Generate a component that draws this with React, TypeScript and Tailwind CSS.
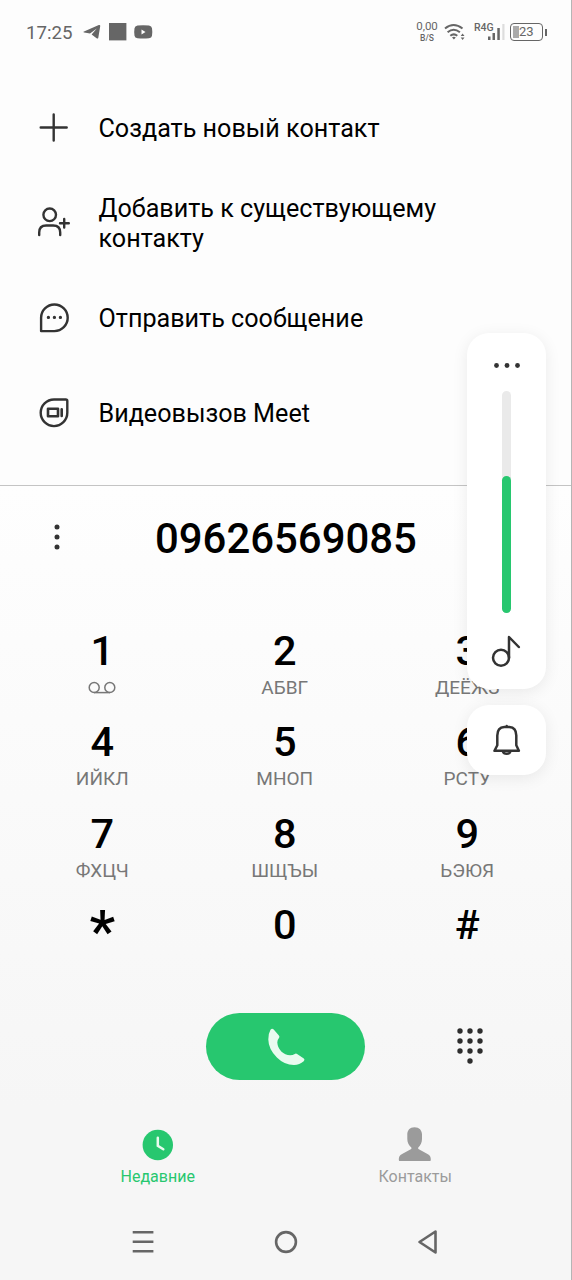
import type { ReactNode } from "react";

function StatusBar() {
  return (
    <header className="flex h-16 shrink-0 items-center pl-[26px] pr-[24px] text-[#666]">
      <span className="w-[57px] pt-[2px] text-[18.700px] leading-none">17:25</span>
      <svg className="h-5 w-[70px]" viewBox="0 0 70 20" fill="#666">
        <path d="M1 9.600 15.800 3.100q1.600-.5 1.400 1.100l-1.900 11.500q-.4 1.400-1.700.5l-5-3.600 5.200-6-6.800 4.800-5.800-.8q-1.500-.4-.2-1z" />
        <path d="M26 1h17.400v17.400H26z" />
        <path
          fillRule="evenodd"
          d="M54.500 3.600q5.500-.9 11.500 0 2.700.4 3 2.700.6 3.700 0 7.400-.3 2.200-3 2.500-6 .7-11.500 0-2.700-.3-3-2.500-.6-3.700 0-7.400.3-2.300 3-2.700zM58.500 7.500v5l4-2.500z"
        />
      </svg>
      <div className="ml-auto flex items-center">
        <div className="flex h-6 w-6 flex-col items-center justify-between pb-px text-[11.500px] leading-[12px]">
          <span>0,00</span>
          <span className="text-[8.500px] font-medium leading-[9px]">B/S</span>
        </div>
        <svg className="ml-[5px] h-6 w-[22px]" viewBox="0 0 22 24" fill="none" stroke="#666" strokeWidth="2">
          <path d="M1 8.500q8.500-7 17.500 0M3.600 12.200q6-5 12.300 0M6.300 15.800q3.500-2.800 7 0" />
          <path d="m8 17.500 1.900 2 1.900-2q-1.900-1.300-3.800 0zM16.700 16l1.900-2.500 1.900 2.500zM16.700 17.500l1.900 2.500 1.900-2.500z" fill="#666" stroke="none" />
        </svg>
        <div className="relative ml-2 h-6 w-[31px] text-[10.500px] leading-none">
          <span className="absolute left-0 top-[3px] font-medium">R4G</span>
          <svg className="h-6 w-[31px]" viewBox="0 0 31 24" fill="#666">
            <path d="M14 16.500h2.500V20H14zM18.500 13H21v7h-2.500zM23.300 8h2.500v12h-2.500z" />
            <path d="M28.300 4h2.200v16h-2.200z" fill="#ddd" />
          </svg>
        </div>
        <div className="ml-[5px] flex items-center gap-[2px]">
          <div className="relative h-[18px] w-[33px] rounded-[4px] border-[1.500px] border-[#666]">
            <div className="absolute left-[2px] top-[2px] h-[12px] w-[6px] bg-[#aaa]" />
            <span className="absolute left-[8px] top-[1px] text-[13px] leading-[14px]">23</span>
          </div>
          <div className="h-[7px] w-[2px] bg-[#666]" />
        </div>
      </div>
    </header>
  );
}

function MenuRow({ icon, children }: { icon: ReactNode; children: ReactNode }) {
  return (
    <li className="flex h-[95px] items-center pl-[36px]">
      <svg
        className="mr-[26.500px] h-9 w-9 shrink-0"
        viewBox="0 0 36 36"
        fill="none"
        stroke="#333"
        strokeWidth="2.400"
        strokeLinecap="round"
        strokeLinejoin="round"
      >
        {icon}
      </svg>
      <span className="w-[380px] pt-[2px] text-[25.150px] leading-[30px]">{children}</span>
    </li>
  );
}

const plusIcon = <path d="M17.700 4.500v26M4.700 17.500h26" />;
const addPersonIcon = (
  <>
    <circle cx="13.700" cy="9.800" r="6.300" />
    <path d="M3.200 30v-2.500q0-7 7-7h7q7 0 7 7V30M28.200 14v8.500M24 18.200h8.800" />
  </>
);
const messageIcon = (
  <>
    <path d="M5.100 31.100V17.800A13.300 13.300 0 1 1 18.400 31.100z" />
    <path d="M12.400 17.400h.01M18.400 17.400h.01M24.400 17.400h.01" strokeWidth="3.300" />
  </>
);
const meetIcon = (
  <>
    <path d="M31.300 6q0-1.500-1.500-1.500H18A13.300 13.300 0 1 0 31.300 17.800z" />
    <path d="M12 13.800h10v7.500H12zM25.700 14.200v6.700" strokeWidth="2.600" />
  </>
);

const keys: [string, string][] = [
  ["1", ""],
  ["2", "АБВГ"],
  ["3", "ДЕЁЖЗ"],
  ["4", "ИЙКЛ"],
  ["5", "МНОП"],
  ["6", "РСТУ"],
  ["7", "ФХЦЧ"],
  ["8", "ШЩЪЫ"],
  ["9", "ЬЭЮЯ"],
  ["*", ""],
  ["0", ""],
  ["#", ""],
];

function Key({ digit, letters }: { digit: string; letters: string }) {
  return (
    <button className="flex h-[91.300px] flex-col items-center">
      {digit === "*" ? (
        <span className="h-[50px] pt-[7px] text-[58px] font-medium leading-[50px]">*</span>
      ) : (
        <span className="h-[50px] pt-px text-[41.500px] font-medium leading-[50px]">{digit}</span>
      )}
      {digit === "1" && (
        <svg className="mt-[6px] h-3.5 w-7" viewBox="0 0 28 14" fill="none" stroke="#777" strokeWidth="1.500">
          <circle cx="6.200" cy="6.500" r="5" />
          <circle cx="21.800" cy="6.500" r="5" />
          <path d="M6 11.600h16" />
        </svg>
      )}
      {letters && <span className="text-[19px] leading-[25px] text-[#777]">{letters}</span>}
    </button>
  );
}

function VolumePanel() {
  return (
    <aside className="absolute left-[467px] top-[333px] flex w-[79px] flex-col gap-4">
      <div className="flex h-[356px] flex-col items-center rounded-[22px] bg-white pt-[30px] shadow-[0_3px_16px_rgba(0,0,0,0.08)]">
        <svg className="h-[5px] w-[26px]" viewBox="0 0 26 5" fill="#333">
          <circle cx="2.500" cy="2.500" r="2.400" />
          <circle cx="13" cy="2.500" r="2.400" />
          <circle cx="23.500" cy="2.500" r="2.400" />
        </svg>
        <div className="mt-[23px] flex h-[222px] w-[9px] flex-col justify-end rounded-full bg-[#eaeaea]">
          <div className="h-[137px] rounded-full bg-[#27c76f]" />
        </div>
        <svg className="mt-[21px] h-9 w-9" viewBox="0 0 36 36" fill="none" stroke="#333" strokeWidth="2.500" strokeLinejoin="round" strokeLinecap="round">
          <circle cx="12" cy="23.800" r="8" />
          <path d="M20 23.800V3l9.800 10" />
        </svg>
      </div>
      <div className="flex h-[70px] items-center justify-center rounded-[22px] bg-white shadow-[0_3px_16px_rgba(0,0,0,0.08)]">
        <svg className="h-9 w-9" viewBox="0 0 36 36" fill="none" stroke="#333" strokeWidth="2.500" strokeLinejoin="round" strokeLinecap="round">
          <path d="M5.500 28.800h24.400l-2.600-5.500V13.500q0-8-7-8.500h-5q-7 .5-7 8.500v9.800zM17.700 4.800V4M13.900 29.500a3.900 3 0 0 0 7.600 0" />
        </svg>
      </div>
    </aside>
  );
}

export default function App() {
  return (
    <div className="relative flex h-[1280px] w-[572px] flex-col overflow-hidden border-r border-[#b5b5b5] bg-[#f6f6f6] font-['Roboto',sans-serif] text-black">
      <section className="h-[486px] shrink-0 border-b border-[#c4c4c4] bg-[#fdfdfd]">
        <StatusBar />
        <ul className="pt-4">
          <MenuRow icon={plusIcon}>Создать новый контакт</MenuRow>
          <MenuRow icon={addPersonIcon}>Добавить к существующему контакту</MenuRow>
          <MenuRow icon={messageIcon}>Отправить сообщение</MenuRow>
          <MenuRow icon={meetIcon}>Видеовызов Meet</MenuRow>
        </ul>
      </section>

      <main className="flex h-[624px] shrink-0 flex-col bg-linear-to-b from-[#fefefe] to-[#f6f6f6]">
        <div className="flex h-[104px] items-center pl-[54px]">
          <svg className="mb-[2px] h-[26px] w-1.5" viewBox="0 0 6 26" fill="#333">
            <circle cx="3" cy="3" r="2.500" />
            <circle cx="3" cy="13" r="2.500" />
            <circle cx="3" cy="23" r="2.500" />
          </svg>
          <span className="ml-[95px] pt-[2px] text-[41.900px] font-medium leading-none">09626569085</span>
        </div>
        <div className="grid h-[401px] grid-cols-3 content-start pl-[11px] pr-[12.500px] pt-[35px]">
          {keys.map(([digit, letters]) => (
            <Key key={digit} digit={digit} letters={letters} />
          ))}
        </div>
        <div className="mt-[22px] flex items-center">
          <button className="ml-[206px] flex h-[67px] w-[159px] items-center justify-center rounded-full bg-[#27c76f]">
            <svg className="h-10 w-10" viewBox="0 0 40 40" fill="#e9fbef">
              <path d="M4.500 2.700q1.600-1.900 3.200-.2l5.200 6q1 1.200.2 2.200-1.800 2-1.800 4.900.3 5.200 4 8.800 3.800 3.600 8.800 3.900 2.700 0 4.700-1.400 1.100-.8 2.300 0l6.700 4.700q1.500 1.200-.1 2.700-4 3.700-9.800 3.700-9.500 0-17-7.500Q2.500 22.300 2.300 12.500 2.200 6.500 4.500 2.700z" />
            </svg>
          </button>
          <svg className="ml-[91px] mb-px h-9 w-7" viewBox="0 0 28 36" fill="#2e2e2e">
            {[3, 13, 23].map((y) =>
              [4, 14, 24].map((x) => <circle key={`${x}-${y}`} cx={x} cy={y} r="2.700" />),
            )}
            <circle cx="14" cy="33" r="2.700" />
          </svg>
        </div>
      </main>

      <nav className="flex h-[94px] shrink-0 pl-[29px] pr-[27px] pt-[15px] text-[16px] leading-[20px]">
        <div className="flex flex-1 flex-col items-center text-[#27c76f]">
          <svg className="mb-[6px] h-9 w-9" viewBox="0 0 36 36">
            <circle cx="17.800" cy="20" r="15.200" fill="currentColor" />
            <path d="M17.800 12.800v8l5.500 3.500" fill="none" stroke="#e9fbef" strokeWidth="2.500" strokeLinecap="round" />
          </svg>
          Недавние
        </div>
        <div className="flex flex-1 flex-col items-center text-[#9b9b9b]">
          <svg className="mb-[6px] h-9 w-9" viewBox="0 0 36 36" fill="currentColor">
            <path d="M17.500 2.300c4.800 0 7.500 3.200 7.500 7.200v4.500c0 3.500-1.500 6.500-3.700 8.500-.5 1 0 1.500 1 2l8.200 4.500c2.500 1.400 3.300 2.600 3.300 5.600q0 1.900-1.700 1.900H3.500q-1.700 0-1.700-1.900c0-3 .8-4.200 3.300-5.600l8.200-4.500c1-.5 1.500-1 1-2-2.500-2-4-5-4-8.500V9.500c0-4 2.400-7.200 7.200-7.200z" />
          </svg>
          Контакты
        </div>
      </nav>

      <footer className="flex h-[76px] shrink-0 items-center pl-[130px]">
        <svg className="h-7 w-[310px]" viewBox="0 0 310 28" fill="none" stroke="#666" strokeWidth="2.600">
          <path d="M2.700 4.300h20.700M2.700 13.800h20.700M2.700 23.300h20.700" />
          <circle cx="156" cy="14" r="9.900" />
          <path d="m289.500 14 16-10.500v21z" strokeLinejoin="round" />
        </svg>
      </footer>
      <VolumePanel />
    </div>
  );
}
